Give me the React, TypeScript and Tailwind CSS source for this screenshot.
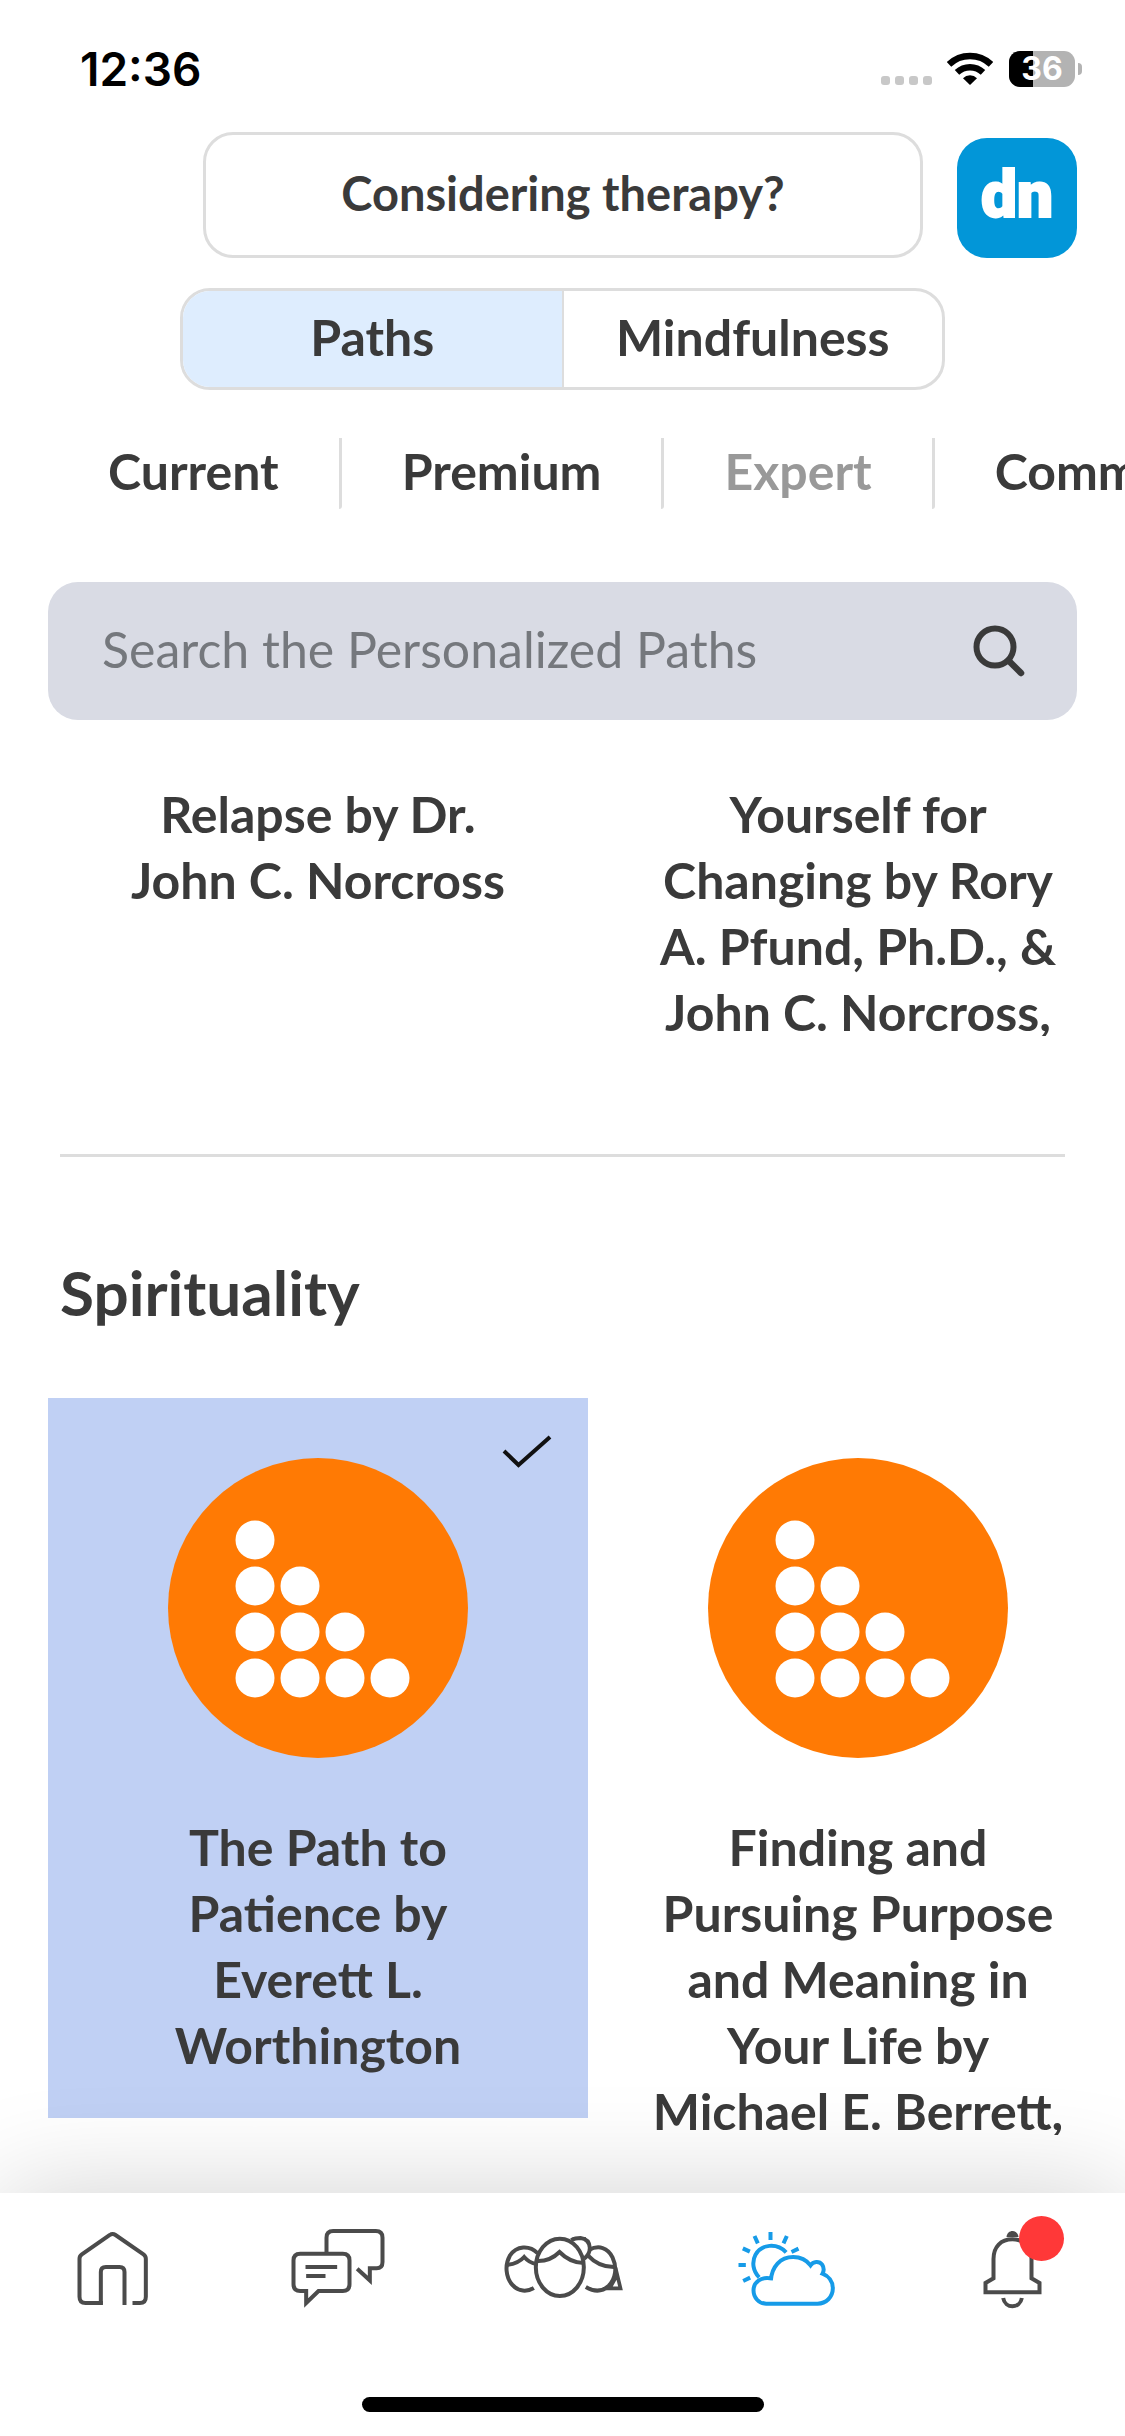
import type { ReactNode } from "react";

function StatusBar() {
  return (
    <div className="flex h-[132px] items-center justify-between pt-[6px] pr-[43px] pl-20 text-black">
      <span className="font-['Inter',sans-serif] text-[46px] font-semibold">12:36</span>
      <div className="flex h-9 items-center">
        <svg width="112" height="36" viewBox="0 0 112 36" aria-hidden="true">
          {[0, 14, 28, 42].map((x) => (
            <rect key={x} x={x} y="25" width="9" height="9" rx="3" fill="#c8c8c8" />
          ))}
          <g fill="none" stroke="#000" strokeWidth="6.5">
            <path d="M68 13.4A30.5 30.5 0 0 1 110 13.4" />
            <path d="M76 21.4A19 19 0 0 1 102 21.4" />
          </g>
          <path d="M82 27.2A10 10 0 0 1 96 27.2L89 34Z" fill="#000" />
        </svg>
        <div className="relative ml-4 flex h-9 w-[66px] items-center justify-center rounded-[11px] bg-[#b3b3b3]">
          <span className="absolute inset-y-0 left-0 w-6 rounded-l-[11px] bg-black" />
          <span className="relative font-['Inter',sans-serif] text-[32px] leading-9 font-bold text-white">36</span>
        </div>
        <span className="ml-[3px] h-3 w-1 rounded-r-full bg-[#b3b3b3]" />
      </div>
    </div>
  );
}

function PathIcon() {
  const dots = [1, 2, 3, 4].flatMap((count, row) =>
    Array.from({ length: count }, (_, col) => ({ x: 87 + col * 45, y: 82 + row * 46 })),
  );
  return (
    <svg width="300" height="300" viewBox="0 0 300 300" aria-hidden="true">
      <circle cx="150" cy="150" r="150" fill="#ff7a04" />
      {dots.map((d) => (
        <circle key={`${d.x}-${d.y}`} cx={d.x} cy={d.y} r="19.5" fill="#fff" />
      ))}
    </svg>
  );
}

function PathCard({ title, selected = false }: { title: ReactNode; selected?: boolean }) {
  return (
    <button
      type="button"
      aria-pressed={selected}
      className={`relative flex flex-col items-center self-start px-12 pt-[60px] pb-10 ${selected ? "bg-[#c0d0f4]" : ""}`}
    >
      {selected && (
        <svg className="absolute top-9 right-9" width="50" height="34" viewBox="0 0 50 34" aria-hidden="true">
          <path d="M2 17L16.500 31L48 3" fill="none" stroke="#111" strokeWidth="4" />
        </svg>
      )}
      <PathIcon />
      <span className="mt-14 block max-h-[321px] overflow-hidden text-[50px] leading-[66px] font-bold">{title}</span>
    </button>
  );
}

function NavButton({ label, children }: { label: string; children: ReactNode }) {
  return (
    <button type="button" aria-label={label} className="flex flex-1 justify-center">
      {children}
    </button>
  );
}

function BottomNav() {
  return (
    <nav className="relative z-10 flex flex-col items-center bg-white pt-8 pb-6 shadow-[0_0_110px_rgba(0,0,0,0.18)]">
      <div className="flex w-full text-[#4b4b4b]">
        <NavButton label="Home">
          <svg width="88" height="88" viewBox="85.5 105 264 264" fill="none" stroke="currentColor" strokeWidth="12">
            <path d="M187 339H135Q117 339 117 320V206Q117 198 124 193L208 135Q216 129 225 135L309 193Q316 198 316 206V320Q316 339 298 339H276" />
            <path d="M181 344V246Q181 231 196 231H237Q252 231 252 246V345" />
          </svg>
        </NavButton>
        <NavButton label="Chat">
          <svg width="96" height="88" viewBox="748.5 105 288 264" fill="none" stroke="currentColor" strokeWidth="12">
            <path d="M858 188V143Q858 123 878 123H1006Q1026 123 1026 143V216Q1026 235 1008 235H988V271L950 236" />
            <path d="M779 191H907Q927 191 927 211V283Q927 303 907 303H834L797 339V303H779Q759 303 759 283V211Q759 191 779 191Z" />
            <path d="M795 231H890M797 258H855" />
          </svg>
        </NavButton>
        <NavButton label="Community">
          <svg width="124" height="88" viewBox="61.5 75 372 264" fill="none" stroke="currentColor" strokeWidth="12">
            <ellipse cx="238" cy="202" rx="72" ry="86" />
            <path d="M168 183Q208 185 237 156Q268 188 310 189" />
            <path d="M172 160C146 134 108 137 88 167C72 195 76 232 95 254C114 276 140 276 160 264" />
            <path d="M82 194Q113 191 131 171Q146 188 166 192" />
            <path d="M272 120Q284 114 300 114C318 116 327 128 328 144C328 158 321 168 311 176" />
            <path d="M276 115H316" strokeWidth="8" />
            <path d="M325 150C355 134 382 143 396 172C411 204 405 238 384 258C363 277 338 274 316 261" />
            <path d="M322 166Q356 203 405 201" />
            <path d="M405 203L420 265H376M408 228L388 264" strokeWidth="11" />
          </svg>
        </NavButton>
        <NavButton label="Paths">
          <svg width="100" height="88" viewBox="772.5 75 300 264" fill="none" stroke="#169be8" strokeWidth="12">
            <path d="M871 241C874 200 899 171 938 171C960 171 978 180 990 196C998 184 1016 182 1025 194C1030 202 1031 212 1026 221C1044 228 1057 244 1057 265C1057 291 1037 311 1011 311H857C835 311 819 293 819 271C819 246 844 229 871 235" />
            <path d="M836 232C818 214 813 187 825 164C843 133 888 127 917 157" />
            <path d="M870 96V120M822 108L832 130M919 108L909 130M787 145L808 155M954 146L933 156M774 195H796M788 243L809 233" />
          </svg>
        </NavButton>
        <NavButton label="Notifications">
          <span className="relative">
            <svg width="88" height="88" viewBox="85.5 105 264 264" fill="none" stroke="currentColor" strokeWidth="12">
              <path d="M135 307V279L159 265V207C159 170 181 148 216 148C251 148 273 170 273 207V265L297 279V307Z" />
              <path d="M188 324C194 357 238 357 244 324" />
              <path d="M198 141C200 117 232 117 234 141Z" fill="currentColor" stroke="none" />
            </svg>
            <span className="absolute -top-[9px] left-[50px] size-[45px] rounded-full bg-[#ff3838]" />
          </span>
        </NavButton>
      </div>
      <span className="mt-[84px] h-[15px] w-[402px] rounded-full bg-black" />
    </nav>
  );
}

const categories = [
  { name: "Current", color: "text-[#3a3a3a]" },
  { name: "Premium", color: "text-[#3a3a3a]" },
  { name: "Expert", color: "text-[#999999]" },
  { name: "Community", color: "text-[#3a3a3a]" },
];

export default function App() {
  return (
    <div className="flex min-h-screen flex-col overflow-x-hidden bg-white font-['Lato',sans-serif] text-[#3a3a3a]">
      <StatusBar />

      <header className="flex flex-col">
        <div className="flex items-end justify-end gap-[34px] pr-12">
          <button
            type="button"
            className="h-[126px] w-[720px] rounded-[30px] border-3 border-[#dddddd] pb-1 text-[47px] font-bold"
          >
            Considering therapy?
          </button>
          <a
            href="#dn"
            className="flex size-[120px] items-center justify-center rounded-[30px] bg-[#0296d8] pb-1 font-['Roboto',sans-serif] text-[64px] leading-none font-black text-white [-webkit-text-stroke:2px_white]"
          >
            dn
          </a>
        </div>

        <div className="mx-auto mt-[30px] flex h-[102px] w-[765px] overflow-hidden rounded-[30px] border-3 border-[#dddddd] text-[50px] font-bold">
          <button type="button" className="flex-1 border-r-2 border-[#dddddd] bg-[#deedfe] pb-1">
            Paths
          </button>
          <button type="button" className="flex-1 pb-1">
            Mindfulness
          </button>
        </div>

        <div className="mt-12 flex overflow-hidden pl-12 text-[50px] leading-[66px] font-bold">
          {categories.map((c) => (
            <button
              key={c.name}
              type="button"
              className={`h-[71px] shrink-0 rounded-br-[3px] border-r-3 border-[#dddddd] px-[60px] pb-2 ${c.color}`}
            >
              {c.name}
            </button>
          ))}
        </div>

        <label className="mx-12 mt-[73px] flex h-[138px] items-center rounded-[30px] bg-[#d9dbe4] pr-[50px] pl-[54px]">
          <input
            type="search"
            aria-label="Search the Personalized Paths"
            placeholder="Search the Personalized Paths"
            className="min-w-0 flex-1 bg-transparent pb-1 text-[50px] outline-none placeholder:text-[#75787d]"
          />
          <svg width="56" height="56" viewBox="0 0 56 56" fill="none" stroke="#3a3a3a" aria-hidden="true">
            <circle cx="24" cy="24" r="18.500" strokeWidth="6" />
            <path d="M38 38L50 50" strokeWidth="6.500" strokeLinecap="round" />
          </svg>
        </label>
      </header>

      <main className="flex-1 pt-[61px] pl-12">
        <div className="-mr-[3px] grid grid-cols-2 text-center text-[50px] leading-[66px] font-bold">
          <p>
            Relapse by Dr.
            <br />
            John C. Norcross
          </p>
          <p className="max-h-[255px] overflow-hidden">
            Yourself for
            <br />
            Changing by Rory
            <br />
            A. Pfund, Ph.D., &amp;
            <br />
            John C. Norcross,
          </p>
        </div>

        <hr className="mt-[118px] mr-[60px] ml-3 border-t-3 border-[#dddddd]" />

        <h2 className="mt-[94px] ml-3 text-[62px] leading-[82px] font-bold">Spirituality</h2>

        <div className="mt-[65px] -mr-[3px] grid grid-cols-2">
          <PathCard
            selected
            title={
              <>
                The Path to
                <br />
                Patience by
                <br />
                Everett L.
                <br />
                Worthington
              </>
            }
          />
          <PathCard
            title={
              <>
                Finding and
                <br />
                Pursuing Purpose
                <br />
                and Meaning in
                <br />
                Your Life by
                <br />
                Michael E. Berrett,
              </>
            }
          />
        </div>
      </main>

      <BottomNav />
    </div>
  );
}
